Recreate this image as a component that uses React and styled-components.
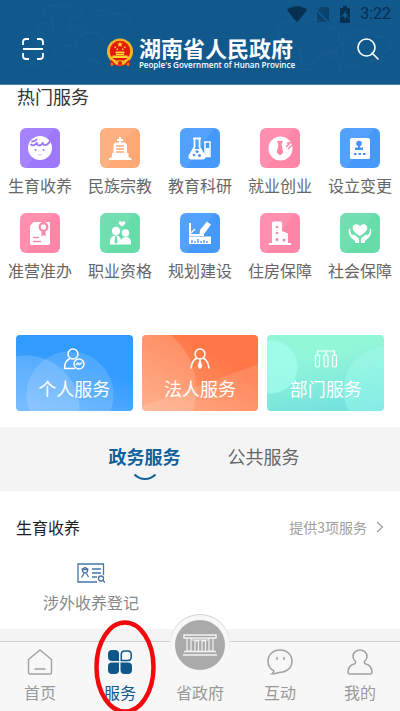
import { useState } from "react";
import styled, { createGlobalStyle } from "styled-components";

const GlobalStyle = createGlobalStyle`
  * {
    box-sizing: border-box;
  }

  body {
    margin: 0;
    background: #ffffff;
    font-family: "Noto Sans CJK SC", "Noto Sans", sans-serif;
  }

  button {
    padding: 0;
    border: none;
    background: none;
    font-family: inherit;
    cursor: pointer;
  }

  a {
    color: inherit;
    text-decoration: none;
  }

  svg {
    display: block;
  }
`;

// 热门服务图标
const BabyIcon = () => (
  <svg width="40" height="40" viewBox="0 0 40 40" fill="none">
    <circle cx="20" cy="20" r="12" fill="#fff" />
    <path
      d="M11 16.500c1.500 1.500 4.500 1 6-2-.500 4 4 4 6 0-.500 4 4.500 3.500 7.500-2M12 13.500c2 0 3.500-.500 4.500-2"
      stroke="#9c78f8"
      strokeWidth="1.800"
      strokeLinecap="round"
    />
    <circle cx="15.500" cy="22" r="1" fill="#9c78f8" />
    <circle cx="23.500" cy="22" r="1" fill="#9c78f8" />
    <path d="M18 26.500c1 .500 2.500.500 3.500 0" stroke="#cdbcfb" />
  </svg>
);

const ChurchIcon = () => (
  <svg width="40" height="40" viewBox="0 0 40 40" fill="#fff">
    <path d="M19 9h2v2h2v2h-2v1.500h4l2 2V25h1.500v4l3 1.500V32H9v-1.500l3-1.500v-4h1.500v-8.500l2-2H19V13h-2v-2h2z" />
    <path d="M16 18h8M16 21h8M16 24h8" stroke="#fca97a" strokeWidth="1.400" />
  </svg>
);

const FlaskIcon = () => (
  <svg width="40" height="40" viewBox="0 0 40 40" fill="none">
    <path d="M13 10.500h8M14.500 11v8L9.500 28c-.600 1.500 0 2.500 1.500 2.500h12c1.500 0 2-1 1.500-2.500l-5-9v-8" stroke="#fff" strokeWidth="1.800" />
    <path d="M13.500 21h7.500l4 9H9.500z" fill="#fff" />
    <circle cx="17" cy="23.500" r="1.500" fill="#4794f9" />
    <circle cx="14" cy="27" r="1.300" fill="#4794f9" />
    <circle cx="19.500" cy="27.500" r="1.500" fill="#4794f9" />
    <path d="M24 14h7M25 14v14.500h5V14" stroke="#fff" strokeWidth="1.500" />
    <path d="M25.500 20h4v8h-4z" fill="#fff" />
  </svg>
);

const TieIcon = () => (
  <svg width="40" height="40" viewBox="0 0 40 40">
    <circle cx="20.500" cy="20.500" r="12" fill="#fff" />
    <path d="M17 13h6l-1.500 3.500 1.800 8L20 27.500l-3.300-3 1.800-8z" fill="#fd86a6" />
    <path d="m26 19 5-5M27 15.500l2-1.500M28 21l4-4" stroke="#fd86a6" strokeWidth="1.500" />
  </svg>
);

const StampIcon = () => (
  <svg width="40" height="40" viewBox="0 0 40 40">
    <rect x="10" y="10" width="20" height="21" rx="1.500" fill="#fff" />
    <circle cx="19" cy="15.500" r="2.800" fill="#4594f8" />
    <path d="M18 17h2v2.500h3V22h-8v-2.500h3z" fill="#4594f8" />
    <path d="M14 25h2.500v2H14zM18.500 25H21v2h-2.500zM23 25h2.500v2H23z" fill="#4594f8" />
  </svg>
);

const CertificateIcon = () => (
  <svg width="40" height="40" viewBox="0 0 40 40">
    <path d="M13.500 9H30v21q0 2-2 2H12q-2 0-2-2V13z" fill="#fff" />
    <circle cx="23.500" cy="14" r="3.800" fill="#fff" stroke="#fb86a7" strokeWidth="2.200" />
    <path d="M21.500 18.500v5l2-1.500 2 1.500v-5" fill="#fb86a7" />
    <path d="M13 24.500h6M13 28.500h8" stroke="#fb86a7" strokeWidth="1.500" />
  </svg>
);

const CoupleIcon = () => (
  <svg width="40" height="40" viewBox="0 0 40 40" fill="#fff">
    <path d="M22 13.500c-4-2.500-3.500-4.500-2.500-5s2 0 2.500.800c.500-.800 1.500-1.300 2.500-.800s1.500 2.500-2.500 5z" />
    <circle cx="16" cy="18" r="4.200" />
    <path d="M10 31.500c-.500-6 1.500-9 6-9 3 0 4.500 1.500 5 4.500 1-2 2.500-3 5-3 4 0 5.500 3 5 7.500z" />
    <circle cx="25.500" cy="20" r="3.800" />
    <path d="m15 24 1-1 1 1 .500 5-1.500 2-1.500-2z" fill="#67dca9" />
  </svg>
);

const RulerIcon = () => (
  <svg width="40" height="40" viewBox="0 0 40 40" fill="none">
    <path d="M10 10v12h14" stroke="#fff" strokeWidth="2" />
    <path d="m11 20 4-4" stroke="#fff" strokeWidth="1.500" />
    <path d="m27 8.500 4 3-6.500 9-5 1.500.500-5z" fill="#fff" />
    <path d="M9 23.500h22V31H9z" fill="#fff" />
    <path d="M12 30v-3M15 30v-2M18 30v-4M21 30v-2M24 30v-3M27 30v-2" stroke="#438ff8" strokeWidth="1.300" />
  </svg>
);

const HouseIcon = () => (
  <svg width="40" height="40" viewBox="0 0 40 40">
    <path d="M12 10q0-1.500 1.500-1.500h7q1.500 0 1.500 1.500v8l6 2.500V30h3v2H9v-2h3z" fill="#fff" />
    <circle cx="17" cy="14" r="1.300" fill="#fc86a6" />
    <circle cx="17" cy="20" r="1.300" fill="#fc86a6" />
    <circle cx="17" cy="26.500" r="1.500" fill="#fc86a6" />
    <circle cx="24" cy="27" r="1.500" fill="#fc86a6" />
  </svg>
);

const CareIcon = () => (
  <svg width="40" height="40" viewBox="0 0 40 40" fill="#fff">
    <path d="M20 23c-7-4.500-8-7-7-9.500 1.200-3 5.500-3 7 0 1.500-3 5.800-3 7 0 1 2.500 0 5-7 9.500z" />
    <path d="M9 15.500c-1 3 0 6 2 9l4 3.500v2h4.200v-3c0-2-2.200-3.500-5.200-5.200-1.200-.700-2 .500-1 1.500-2-1.800-3-4.500-2.800-7.500zM31 15.500c1 3 0 6-2 9L25 28v2h-4.200v-3c0-2 2.200-3.500 5.200-5.200 1.200-.700 2 .500 1 1.500 2-1.800 3-4.500 2.800-7.500z" />
  </svg>
);

// 服务卡片图标
const PersonCheckIcon = () => (
  <svg width="24" height="24" viewBox="0 0 24 24" fill="none" stroke="#fff" strokeWidth="1.500">
    <circle cx="11" cy="7" r="5" />
    <path d="M8 11.500c-3.500 1.500-5.500 5-5.500 10H13" />
    <circle cx="17" cy="17" r="5" />
    <path d="m14 18 2-2 1.500 1.500 2.500-2" />
  </svg>
);

const LegalPersonIcon = () => (
  <svg width="24" height="24" viewBox="0 0 24 24" fill="none" stroke="#fff" strokeWidth="1.500">
    <circle cx="12" cy="7" r="5" />
    <path d="M9 11c-3.500 1.500-5.500 5-6 10.500M15 11c3.500 1.500 5.500 5 6 10.500M12 12v3" />
    <path d="m12 14-1.500 5 1.500 2 1.500-2z" fill="#fff" />
  </svg>
);

const DepartmentIcon = () => (
  <svg width="24" height="24" viewBox="0 0 24 24" fill="none" stroke="#fff" strokeWidth="1.200">
    <path d="M3.500 8V4h17v4M12 4v4" />
    <rect x="1.500" y="8" width="4" height="12" rx="1.500" />
    <rect x="10" y="8" width="4" height="12" rx="1.500" />
    <rect x="18.500" y="8" width="4" height="12" rx="1.500" />
  </svg>
);

const ScanIcon = () => (
  <svg width="22" height="22" viewBox="0 0 22 22" fill="none" stroke="#fff" strokeWidth="1.800">
    <path d="M1 7V4q0-3 3-3h3M15 1h3q3 0 3 3v3M1 15v3q0 3 3 3h3M15 21h3q3 0 3-3v-3M1 11h20" />
  </svg>
);

const SearchIcon = () => (
  <svg width="22" height="22" viewBox="0 0 22 22" fill="none" stroke="#fff" strokeWidth="1.600">
    <circle cx="9.500" cy="9.500" r="8.500" />
    <path d="m15 15 6 6" strokeLinecap="round" />
  </svg>
);

const Emblem = () => (
  <svg width="28" height="30" viewBox="0 0 28 30">
    <path d="M5 19h18l1 9-5-1-5 1.500L9 27l-5 1z" fill="#e22a16" />
    <circle cx="14" cy="13.500" r="13" fill="#f4bd28" />
    <circle cx="14" cy="13.500" r="12" fill="none" stroke="#e8921f" strokeDasharray="1 2" />
    <circle cx="14" cy="13" r="10.300" fill="#e5190f" />
    <path d="m14 3.500.800 1.900 2 .100-1.500 1.400.500 2-1.800-1.100-1.800 1.100.500-2L11.200 5.500l2-.100z" fill="#ffd52b" />
    <path d="M8.500 8.500h1.500V10H8.500zM18 8.500h1.500V10H18zM10.500 10.500H12V12h-1.500zM16 10.500h1.500V12H16z" fill="#ffd52b" />
    <path d="m9 15 1-1.500h8l1 1.500zM10 15.500h8V17h-8zM6.500 17.500h15l.500 2.500H6z" fill="#ffd52b" />
    <path d="M8 24c2-2.500 10-2.500 12 0l-2 2.500h-8z" fill="#f4bd28" />
    <circle cx="14" cy="25" r="2" fill="#e5190f" />
    <path d="M5 22.500 8 26M23 22.500 20 26" stroke="#e5190f" strokeWidth="1.500" />
    <path d="M6 28v-3M22 28v-3" stroke="#f4bd28" />
  </svg>
);

const Peonies = () => (
  <svg width="100%" height="84" viewBox="0 0 400 84" preserveAspectRatio="none" fill="none" stroke="#2a6a9b" strokeOpacity=".35">
    <path d="M36 26c8-6 14-2 17 5 2-9-2-17-11-18 2-7 12-10 19-5 8-5 20 1 20 8-8 0-12 5-11 14 8-7 17-5 20 2-9 2-14 7-15 14-8-2-14 0-19 7-4-8-11-10-18-7 3-8 1-14-2-20z" />
    <path d="M17 36c6-6 14-5 18 1M14 55c4-8 14-9 21-4 2 8 9 12 18 10M22 68c10-7 20-5 25 6M58 76c3-10 12-15 22-11 5-6 13-7 19-2" />
    <path d="M88 18c6-9 18-10 24-3 8-4 17 0 19 8M90 32c7 0 12 4 13 11M85 54c7 0 13 5 13 13" />
    <path d="M276 28c7-9 18-10 26-3 6-8 20-7 25 2 9-1 14 6 12 14 7 4 7 12 1 17-5-6-12-8-20-4-2 9-11 13-20 9 3-8 0-16-8-19-6 4-13 3-17-3 5-2 7-7 1-13z" />
    <path d="M333 19c8-5 16-3 21 4M350 34c8-7 19-5 24 3 9-2 16 3 17 11-6 2-10 7-9 15-8-4-16-2-21 5-7-5-15-4-21 2 0-9-6-15-14-14 9-8 18-9 24-22zM288 72c8-8 18-6 23 1" />
  </svg>
);

const HomeIcon = () => (
  <svg width="26" height="26" viewBox="0 0 26 26" fill="none" stroke="#a2a2a2" strokeWidth="1.400">
    <path d="M1.500 10.500 13 1l11.500 9.500v13q0 1.500-1.500 1.500H3q-1.500 0-1.500-1.500zM7.500 20h11" />
  </svg>
);

const ServiceIcon = () => (
  <svg width="26" height="26" viewBox="0 0 26 26" fill="#0f568b">
    <path d="M5 1h3q4 0 4 4v7H5q-4 0-4-4V5q0-4 4-4zM5 13.500h7v7.500q0 4-4 4H5q-4 0-4-4v-3.500q0-4 4-4zM13.500 13.500H21q4 0 4 4V21q0 4-4 4h-3.500q-4 0-4-4z" />
    <path d="M17.500 2H21q3.200 0 3.200 3.500V8q0 3.500-3.200 3.500h-6.700V5.500q0-3.500 3.200-3.500z" fill="none" stroke="#0f568b" strokeWidth="1.500" />
  </svg>
);

const GovernmentIcon = () => (
  <svg width="34" height="22" viewBox="0 0 34 22" fill="none" stroke="#f2f2f2" strokeWidth="1.500">
    <path d="M1 1h32v3H1zM1 17.500h32M0 21h34" />
    <path d="M4 4v13h4V4M12 17V7h3.500v10M19 17V7h3.500v10M26 4v13h4V4M8 6h18" strokeWidth="1.200" />
  </svg>
);

const ChatIcon = () => (
  <svg width="26" height="26" viewBox="0 0 26 26" fill="none" stroke="#a0a0a0" strokeWidth="1.500">
    <path d="M13 1c7 0 12 5 12 11.200 0 7.300-6.500 11.500-13.500 11.300-2 1-4 1.500-6.500 1.300 1.300-.800 2-1.800 2-3C3.300 20 1 16.500 1 12.200 1 6 6 1 13 1z" />
    <path d="M10 8v3M17 8v3" />
  </svg>
);

const UserIcon = () => (
  <svg width="26" height="26" viewBox="0 0 26 26" fill="none" stroke="#a0a0a0" strokeWidth="1.500">
    <path d="M13 1c4 0 7 2.800 7 6.500 0 2.200-1.200 3.800-2.500 5-.500 1.500 0 2 1.500 2.500 4 1.200 6 3.500 6 8 0 1.300-.500 2-2 2H3c-1.500 0-2-.700-2-2 0-4.500 2-6.800 6-8 1.500-.500 2-1 1.500-2.500C7.200 11.300 6 9.700 6 7.500 6 3.800 9 1 13 1z" />
  </svg>
);

const hotServices = [
  { name: "生育收养", color: "#9d78fb", icon: <BabyIcon /> },
  { name: "民族宗教", color: "#fda976", icon: <ChurchIcon /> },
  { name: "教育科研", color: "#4499fb", icon: <FlaskIcon /> },
  { name: "就业创业", color: "#ff86a7", icon: <TieIcon /> },
  { name: "设立变更", color: "#4499fb", icon: <StampIcon /> },
  { name: "准营准办", color: "#ff86a7", icon: <CertificateIcon /> },
  { name: "职业资格", color: "#66dca9", icon: <CoupleIcon /> },
  { name: "规划建设", color: "#4499fb", icon: <RulerIcon /> },
  { name: "住房保障", color: "#ff86a7", icon: <HouseIcon /> },
  { name: "社会保障", color: "#66dca9", icon: <CareIcon /> },
];

const cards = [
  {
    name: "个人服务",
    icon: <PersonCheckIcon />,
    background:
      "radial-gradient(circle at 10px 74px, rgba(255,255,255,.16) 0 53px, transparent 54px), radial-gradient(circle at 54px 60px, rgba(255,255,255,.14) 0 43px, transparent 44px), linear-gradient(15deg, #62b1fe, #329bff 60%)",
  },
  {
    name: "法人服务",
    icon: <LegalPersonIcon />,
    background:
      "linear-gradient(160deg, transparent 60%, rgba(255,255,255,.12) 61%), radial-gradient(circle at -14px 54px, rgba(255,255,255,.15) 0 68px, transparent 69px), linear-gradient(30deg, #ffa378, #ff7746 70%)",
  },
  {
    name: "部门服务",
    icon: <DepartmentIcon />,
    background:
      "radial-gradient(circle at 4px 32px, rgba(165,255,240,.65) 0 26px, transparent 27px), radial-gradient(circle at 120px 55px, rgba(165,255,240,.4) 0 43px, transparent 44px), linear-gradient(170deg, #92f6d8 30%, #70dedf)",
  },
];

const tabs = ["政务服务", "公共服务"];

const App = () => {
  const [activeTab, setActiveTab] = useState("政务服务");

  return (
    <>
      <GlobalStyle />
      <Header>
        <Pattern>
          <Peonies />
        </Pattern>
        <StatusBar>
          <svg width="20" height="17" viewBox="0 0 20 17" fill="#062f50">
            <path d="M0 4c6-5 14-5 20 0L10 16.500z" />
          </svg>
          <svg width="14" height="17" viewBox="0 0 14 17">
            <path d="M5 1h7q1 0 1 1v13L2 4zM1 6l10 10H2q-1 0-1-1z" fill="#0b426b" />
            <path d="m0 1 14 15" stroke="#0b426b" />
          </svg>
          <svg width="12" height="17" viewBox="0 0 12 17">
            <path d="M4 0h4v2h2q1 0 1 1v13q0 1-1 1H2q-1 0-1-1V3q0-1 1-1h2z" fill="#062f50" />
            <path d="M7 4 3 10h2.500v4L9 8H6.500z" fill="#11588c" />
          </svg>
          <Time>3:22</Time>
        </StatusBar>
        <TitleBar>
          <IconButton aria-label="扫一扫">
            <ScanIcon />
          </IconButton>
          <Brand>
            <Emblem />
            <BrandText>
              <BrandName>湖南省人民政府</BrandName>
              <BrandEnglish>People's Government of Hunan Province</BrandEnglish>
            </BrandText>
          </Brand>
          <IconButton aria-label="搜索">
            <SearchIcon />
          </IconButton>
        </TitleBar>
      </Header>

      <Main>
        <HotTitle>热门服务</HotTitle>
        <HotGrid>
          {hotServices.map((item) => (
            <HotItem href="#" key={item.name}>
              <HotIcon $color={item.color}>{item.icon}</HotIcon>
              {item.name}
            </HotItem>
          ))}
        </HotGrid>

        <CardRow>
          {cards.map((card) => (
            <Card key={card.name} $background={card.background}>
              {card.icon}
              {card.name}
            </Card>
          ))}
        </CardRow>

        <TabRow role="tablist">
          {tabs.map((tab) => (
            <Tab
              key={tab}
              role="tab"
              aria-selected={activeTab === tab}
              $active={activeTab === tab}
              onClick={() => setActiveTab(tab)}
            >
              {tab}
              {activeTab === tab && (
                <svg width="24" height="8" viewBox="0 0 24 8" fill="none">
                  <path d="M1.500 1.500c6 6 15 6 21 0" stroke="#0f619b" strokeWidth="2" />
                </svg>
              )}
            </Tab>
          ))}
        </TabRow>

        <SectionHead>
          <SectionTitle>生育收养</SectionTitle>
          <MoreLink href="#">
            提供3项服务
            <svg width="8" height="12" viewBox="0 0 8 12" fill="none">
              <path d="m1 1 5.500 5L1 11" stroke="#a0a0a0" strokeWidth="1.300" />
            </svg>
          </MoreLink>
        </SectionHead>
        <ServiceList>
          <ServiceLink href="#">
            <svg width="28" height="20" viewBox="0 0 28 20" fill="none" stroke="#4475a6" strokeWidth="1.300">
              <path d="M20 19H1V1h25.500v11M15 6h9M15 10h9M15 14h5" />
              <path d="M4.500 6.500 8 4.500l3.500 2M5.500 6.500h5v2q-2.500 3-5 0zM7 10.500l-2.500 4M9.500 10.500l2 3.500" />
              <circle cx="24" cy="15.500" r="2.500" />
              <path d="m26 17.500 2 2" />
            </svg>
            涉外收养登记
          </ServiceLink>
        </ServiceList>
        <Divider />
      </Main>

      <NavBar>
        <NavItem href="#">
          <HomeIcon />
          首页
        </NavItem>
        <NavItem href="#" $active>
          <ServiceIcon />
          服务
          <Marker viewBox="0 0 62 94">
            <ellipse cx="31" cy="47" rx="28.500" ry="44.500" fill="none" stroke="#f00a0d" strokeWidth="4.500" />
          </Marker>
        </NavItem>
        <NavItem href="#">
          <NavCircle>
            <GovernmentIcon />
          </NavCircle>
          省政府
        </NavItem>
        <NavItem href="#">
          <ChatIcon />
          互动
        </NavItem>
        <NavItem href="#">
          <UserIcon />
          我的
        </NavItem>
      </NavBar>
    </>
  );
};

export default App;

const Header = styled.header`
  position: relative;
  padding: 4px 9px 10px 22px;
  background-color: #11588c;
  border-bottom: 1px solid #4c83aa;
`;

const Pattern = styled.div`
  position: absolute; /* 背景花纹 */
  inset: 0;
`;

const StatusBar = styled.div`
  display: flex;
  justify-content: flex-end;
  align-items: center;
  gap: 9px;
  height: 20px;
`;

const Time = styled.span`
  color: #062f50;
  font-family: Roboto, sans-serif;
  font-size: 16px;
  line-height: 20px;
`;

const TitleBar = styled.div`
  position: relative;
  display: flex;
  justify-content: space-between;
  align-items: center;
  height: 50px;
  padding-right: 12px;
`;

const IconButton = styled.button`
  width: 22px;
  height: 22px;
`;

const Brand = styled.div`
  display: flex;
  align-items: center;
  gap: 5px;
  padding-top: 7px;
`;

const BrandText = styled.div`
  display: flex;
  flex-direction: column;
  gap: 2px;
  color: #ffffff;
  white-space: nowrap;
`;

const BrandName = styled.h1`
  margin: 0;
  font-size: 22px;
  font-weight: 700;
  line-height: 22px;
`;

const BrandEnglish = styled.span`
  font-family: "Open Sans", "Noto Sans", sans-serif;
  font-size: 8px;
  font-weight: 600;
  line-height: 10px;
`;

const Main = styled.main`
  padding-bottom: 70px; /* 底部导航的高度 */
`;

const HotTitle = styled.h2`
  margin: 0;
  padding: 0 17px;
  color: #333333;
  font-size: 18px;
  font-weight: 400;
  line-height: 22px;
`;

const HotGrid = styled.div`
  display: grid;
  grid-template-columns: repeat(5, 1fr);
  row-gap: 16px;
  padding-top: 21px;
`;

const HotItem = styled.a`
  display: flex;
  flex-direction: column;
  align-items: center;
  gap: 5px;
  color: #666666;
  font-size: 16px;
  line-height: 24px;
`;

const HotIcon = styled.span`
  border-radius: 6px;
  background: linear-gradient(125deg, rgba(255, 255, 255, 0.08) 50%, transparent 51%),
    ${(props) => props.$color};
`;

const CardRow = styled.div`
  display: grid;
  grid-template-columns: repeat(3, 1fr);
  gap: 9px;
  padding: 53px 16px 16px;
`;

const Card = styled.button`
  display: flex;
  flex-direction: column;
  align-items: center;
  gap: 4px;
  height: 76px;
  padding-top: 12px;
  border-radius: 4px;
  background: ${(props) => props.$background};
  color: #ffffff;
  font-size: 18px;
  line-height: 26px;
`;

const TabRow = styled.div`
  display: flex;
  justify-content: center;
  gap: 47px;
  height: 64px;
  padding-top: 16px;
  padding-left: 8px;
  background-color: #f4f4f4;
`;

const Tab = styled.button`
  display: flex;
  flex-direction: column;
  align-items: center;
  gap: 4px;
  color: ${(props) => (props.$active ? "#0f619b" : "#666666")};
  font-size: 18px;
  font-weight: ${(props) => (props.$active ? 700 : 400)};
  line-height: 26px;
`;

const SectionHead = styled.div`
  display: flex;
  justify-content: space-between;
  align-items: center;
  padding: 24px 16px;
`;

const SectionTitle = styled.h3`
  margin: 0;
  color: #1c1c1c;
  font-size: 16px;
  font-weight: 400;
  line-height: 24px;
`;

const MoreLink = styled.a`
  display: flex;
  align-items: center;
  gap: 9px;
  color: #a0a0a0;
  font-size: 14px;
  line-height: 24px;
`;

const ServiceList = styled.div`
  display: flex;
  padding: 0 43px 15px;
`;

const ServiceLink = styled.a`
  display: flex;
  flex-direction: column;
  align-items: center;
  gap: 7px;
  color: #888888;
  font-size: 16px;
  line-height: 24px;
`;

const Divider = styled.div`
  height: 12px;
  background-color: #f4f4f4;
`;

const NavBar = styled.nav`
  position: fixed;
  right: 0;
  bottom: 0;
  left: 0;
  display: grid;
  grid-template-columns: repeat(5, 1fr);
  height: 70px;
  border-top: 1px solid #cfcfcf;
  background-color: #f7f7f7;
`;

const NavItem = styled.a`
  position: relative;
  display: flex;
  flex-direction: column;
  justify-content: flex-end;
  align-items: center;
  gap: 5px;
  padding-bottom: 7px;
  color: ${(props) => (props.$active ? "#0f568b" : "#999999")};
  font-size: 16px;
  line-height: 24px;
`;

const NavCircle = styled.span`
  display: flex;
  flex-shrink: 0;
  justify-content: center;
  align-items: center;
  width: 60px;
  height: 60px;
  margin-top: -30px; /* 向上凸出导航栏 */
  border: 5px solid #f7f7f7;
  border-radius: 50%;
  background-color: #aaaaaa;
  box-shadow: 0 -1px 0 #cfcfcf;
`;

const Marker = styled.svg`
  position: absolute; /* 导航项上方的圈注 */
  top: -22px;
  left: 14px;
  width: 62px;
  height: 94px;
`;
